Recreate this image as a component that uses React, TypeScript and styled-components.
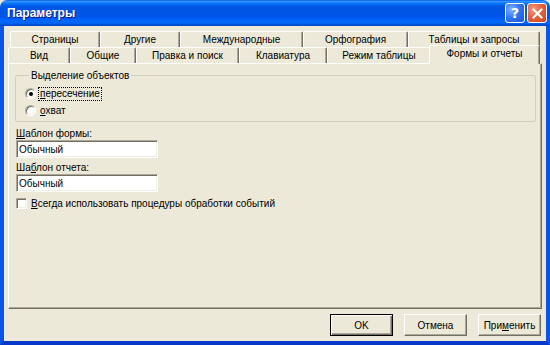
import React from "react";
import styled, { createGlobalStyle } from "styled-components";

const Global = createGlobalStyle`
  html, body { margin: 0; padding: 0; background: #ECE9D8; }
  body { font-family: "Liberation Sans", Arial, sans-serif; font-size: 10px; color: #000; }
  * { box-sizing: border-box; }
`;

const Window = styled.div`
  width: 550px;
  height: 345px;
  display: flex;
  flex-direction: column;
  overflow: hidden;
`;

const TitleBar = styled.div`
  height: 26px;
  flex: none;
  display: flex;
  align-items: center;
  padding: 0 3px 0 7px;
  background: linear-gradient(
    to bottom,
    #0058ee 0%,
    #3593ff 5%,
    #288eff 8%,
    #127dff 11%,
    #036ffc 15%,
    #0262ee 20%,
    #0057e5 26%,
    #0054e3 50%,
    #0055eb 62%,
    #005bf5 72%,
    #026afe 82%,
    #0062ef 90%,
    #0052d6 95%,
    #0044c0 100%
  );
  border-radius: 7px 7px 0 0;
`;

const Title = styled.div`
  flex: 1;
  color: #fff;
  font-family: "Liberation Sans", Arial, sans-serif;
  font-weight: bold;
  font-size: 12px;
  text-shadow: 1px 1px 0 #0a1883;
`;

const CaptionButton = styled.div<{ $red?: boolean }>`
  width: 20px;
  height: 20px;
  margin-left: 2px;
  border: 1px solid #fff;
  border-radius: 3px;
  display: flex;
  align-items: center;
  justify-content: center;
  color: #fff;
  font-weight: bold;
  font-size: 14px;
  font-family: "DejaVu Sans", sans-serif;
  background: ${(p) =>
    p.$red
      ? "radial-gradient(circle at 30% 30%, #f19a7e 0%, #e4643f 45%, #cc4425 100%)"
      : "radial-gradient(circle at 30% 30%, #7fb2ff 0%, #2f73f0 50%, #1a56d8 100%)"};
`;

const Frame = styled.div`
  flex: 1;
  display: flex;
  flex-direction: column;
  background: #ece9d8;
  border-left: 4px solid #0a55e6;
  border-right: 4px solid #0a55e6;
  border-bottom: 4px solid #0838c8;
  padding: 5px 4px 5px 4px;
`;

const Tabs = styled.div`
  display: flex;
  flex-direction: column;
`;

const TabRow = styled.div<{ $inset: number }>`
  display: flex;
  align-items: flex-end;
  height: 16px;
  padding-left: ${(p) => p.$inset}px;
  position: relative;
  z-index: 1;
`;

const Tab = styled.div<{ $w: number; $active?: boolean }>`
  flex: none;
  width: ${(p) => p.$w}px;
  height: ${(p) => (p.$active ? 19 : 16)}px;
  margin: ${(p) => (p.$active ? "0 -2px -1px -2px" : "0")};
  padding-bottom: ${(p) => (p.$active ? 3 : 0)}px;
  background: #ece9d8;
  border-top: 1px solid #fff;
  border-left: 1px solid #fff;
  border-right: 1px solid #716f64;
  box-shadow: inset -1px 0 0 #aca899;
  border-radius: 2px 2px 0 0;
  display: flex;
  align-items: center;
  justify-content: center;
  white-space: nowrap;
  position: relative;
  z-index: ${(p) => (p.$active ? 2 : 1)};
`;

const Panel = styled.div`
  height: 246px;
  flex: none;
  border-top: 1px solid #fff;
  border-left: 1px solid #fff;
  border-right: 1px solid #716f64;
  border-bottom: 1px solid #716f64;
  box-shadow: inset -1px -1px 0 #aca899;
  padding: 5px 5px 0 6px;
  display: flex;
  flex-direction: column;
`;

const Group = styled.fieldset`
  margin: 0;
  padding: 3px 8px 2px 9px;
  border: 1px solid #d0d0bf;
  border-radius: 2px;
  min-width: 0;
`;

const Legend = styled.legend`
  padding: 0 2px;
  margin-left: 4px;
  line-height: 13px;
`;

const RadioRow = styled.div`
  height: 17px;
  display: flex;
  align-items: center;
`;

const RadioCircle = styled.span<{ $checked?: boolean }>`
  width: 11px;
  height: 11px;
  border-radius: 50%;
  background: #fff;
  border: 1px solid;
  border-color: #aca899 #fff #fff #aca899;
  box-shadow: inset 1px 1px 0 #716f64, inset -1px -1px 0 #f1efe2;
  display: flex;
  align-items: center;
  justify-content: center;
  margin-right: 2px;
  &::after {
    content: "";
    width: 4px;
    height: 4px;
    border-radius: 50%;
    background: ${(p) => (p.$checked ? "#000" : "transparent")};
  }
`;

const OptionLabel = styled.span<{ $focus?: boolean }>`
  padding: 0 1px;
  line-height: 12px;
  border: 1px dotted ${(p) => (p.$focus ? "#000" : "transparent")};
`;

const FieldLabel = styled.div<{ $top: number }>`
  margin-top: ${(p) => p.$top}px;
  padding-left: 1px;
  line-height: 13px;
`;

const TextBox = styled.input`
  width: 142px;
  height: 18px;
  margin: 0 0 0 1px;
  padding: 0 2px;
  font: inherit;
  color: #000;
  background: #fff;
  border: 1px solid;
  border-color: #aca899 #fff #fff #aca899;
  box-shadow: inset 1px 1px 0 #716f64, inset -1px -1px 0 #f1efe2;
  outline: none;
`;

const CheckRow = styled.div`
  margin-top: 5px;
  height: 13px;
  display: flex;
  align-items: center;
  padding-left: 1px;
`;

const CheckBox = styled.span`
  width: 11px;
  height: 11px;
  background: #fff;
  border: 1px solid;
  border-color: #aca899 #fff #fff #aca899;
  box-shadow: inset 1px 1px 0 #716f64, inset -1px -1px 0 #f1efe2;
  margin-right: 4px;
`;

const ButtonRow = styled.div`
  margin-top: 5px;
  display: flex;
  justify-content: flex-end;
  gap: 11px;
  padding-right: 1px;
`;

const Button = styled.div<{ $default?: boolean }>`
  width: 63px;
  height: 22px;
  display: flex;
  align-items: center;
  justify-content: center;
  background: #ece9d8;
  border: 1px solid;
  border-color: ${(p) => (p.$default ? "#000" : "#fff #716f64 #716f64 #fff")};
  box-shadow: ${(p) =>
    p.$default
      ? "inset 1px 1px 0 #fff, inset -1px -1px 0 #716f64, inset -2px -2px 0 #aca899"
      : "inset -1px -1px 0 #aca899"};
`;

const rowBack = [
  { label: "Страницы", w: 90 },
  { label: "Другие", w: 80 },
  { label: "Международные", w: 123 },
  { label: "Орфография", w: 105 },
  { label: "Таблицы и запросы", w: 132 },
];

const rowFront = [
  { label: "Вид", w: 62 },
  { label: "Общие", w: 66 },
  { label: "Правка и поиск", w: 103 },
  { label: "Клавиатура", w: 88 },
  { label: "Режим таблицы", w: 104 },
  { label: "Формы и отчеты", w: 111, active: true },
];

export default function App() {
  return (
    <Window>
      <Global />
      <TitleBar>
        <Title>Параметры</Title>
        <CaptionButton>?</CaptionButton>
        <CaptionButton $red>
          <svg width="11" height="11" viewBox="0 0 11 11">
            <path d="M1.5 1.5 L9.5 9.5 M9.5 1.5 L1.5 9.5" stroke="#fff" strokeWidth="2" strokeLinecap="square" />
          </svg>
        </CaptionButton>
      </TitleBar>
      <Frame>
        <Tabs>
          <TabRow $inset={2}>
            {rowBack.map((t) => (
              <Tab key={t.label} $w={t.w}>
                {t.label}
              </Tab>
            ))}
          </TabRow>
          <TabRow $inset={0}>
            {rowFront.map((t) => (
              <Tab key={t.label} $w={t.w} $active={t.active}>
                {t.label}
              </Tab>
            ))}
          </TabRow>
        </Tabs>
        <Panel>
          <Group>
            <Legend>Выделение объектов</Legend>
            <RadioRow>
              <RadioCircle $checked />
              <OptionLabel $focus>
                <u>п</u>ересечение
              </OptionLabel>
            </RadioRow>
            <RadioRow>
              <RadioCircle />
              <OptionLabel>
                <u>о</u>хват
              </OptionLabel>
            </RadioRow>
          </Group>
          <FieldLabel $top={5}>
            <u>Ш</u>аблон формы:
          </FieldLabel>
          <TextBox readOnly defaultValue="Обычный" />
          <FieldLabel $top={3}>
            Ша<u>б</u>лон отчета:
          </FieldLabel>
          <TextBox readOnly defaultValue="Обычный" />
          <CheckRow>
            <CheckBox />
            <span>
              <u>В</u>сегда использовать процедуры обработки событий
            </span>
          </CheckRow>
        </Panel>
        <ButtonRow>
          <Button $default>OK</Button>
          <Button>Отмена</Button>
          <Button>
            При<u>м</u>енить
          </Button>
        </ButtonRow>
      </Frame>
    </Window>
  );
}
